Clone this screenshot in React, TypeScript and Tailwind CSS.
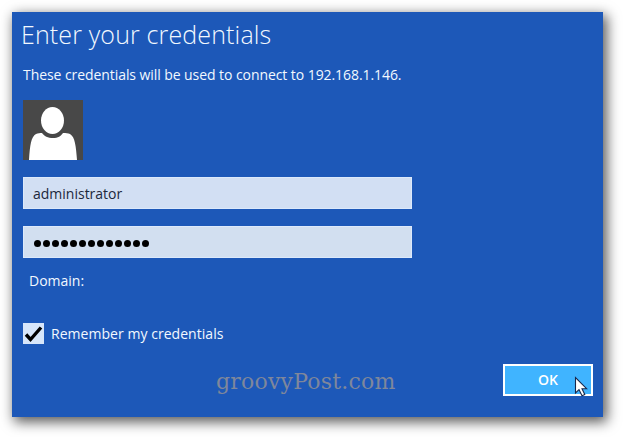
import React, { useState } from 'react';

function UserTile() {
  return (
    <svg className="mt-[15px] block h-[60px] w-[60px] bg-[#484848]" viewBox="0 0 60 60">
      <path
        d="M6 60C7 45 8 37 13 34C15 33 17 33 19 33C21 36 25 38 30 38C35 38 38 36 40 33C43 33 45 33 47 34C52 37 53 46 54 60Z"
        fill="#fff"
      />
      <ellipse cx="29.5" cy="20.5" rx="11.5" ry="13.5" fill="#fff" />
    </svg>
  );
}

function Cursor() {
  return (
    <svg className="absolute left-[69px] top-[10px] h-[22px] w-[15px]" viewBox="0 0 15 22">
      <path
        d="M1.5 1.5V17L5 13.6L8 19.8L10.8 18.5L8 12.7H12.6Z"
        fill="#fff"
        stroke="#17284c"
        strokeWidth="1.1"
      />
    </svg>
  );
}

function PasswordDots({ count }: { count: number }) {
  return (
    <div className="flex gap-[2px]">
      {Array.from({ length: count }, (_, i) => (
        <span key={i} className="h-[7px] w-[7px] rounded-full bg-black" />
      ))}
    </div>
  );
}

export default function App() {
  const [remember, setRemember] = useState(true);

  return (
    <div className="h-[437px] w-[623px] overflow-hidden bg-white pl-3 pt-3 font-['Open_Sans','Noto_Sans',sans-serif]">
      <main className="flex h-[405px] w-[591px] flex-col bg-[#1d58b8] pl-[11px] pr-[10px] text-[14px] text-[#f2f8ff] shadow-[3px_4px_12px_1px_rgba(0,0,0,0.65)]">
        <h1 className="-ml-[2px] mt-[5px] h-[34px] whitespace-nowrap text-[25px] font-[350] leading-[34px] tracking-[0.14px]">
          Enter your credentials
        </h1>
        <p className="mt-[14px] h-5 whitespace-nowrap leading-5 tracking-[-0.07px]">
          These credentials will be used to connect to 192.168.1.146.
        </p>
        <UserTile />
        <div className="mt-[17px] flex h-8 w-[389px] items-center border border-[#dce9fb] bg-[#d2dff3] pl-[9px] text-[#20283b]">
          administrator
        </div>
        <div className="mt-[17px] flex h-8 w-[389px] items-center border border-[#dce9fb] bg-[#d2dff0] pl-[10px] pt-[3px]">
          <PasswordDots count={13} />
        </div>
        <div className="ml-[6px] mt-[13px] h-5 leading-5">Domain:</div>
        <button
          className="mt-[32px] flex h-[21px] items-center gap-[7px] text-left"
          role="checkbox"
          aria-checked={remember}
          onClick={() => setRemember(!remember)}
        >
          <span className="h-[21px] w-[21px] bg-[#d7e6fa]">
            {remember && (
              <svg className="block" width="21" height="21" viewBox="0 0 21 21">
                <path d="M3 11.5L7.5 16.5L18 4.5" fill="none" stroke="#000" strokeWidth="3.4" />
              </svg>
            )}
          </span>
          <span className="whitespace-nowrap leading-5 tracking-[0.04px]">Remember my credentials</span>
        </button>
        <div className="mt-[20px] flex justify-between">
          <span className="ml-[193px] mt-[2px] h-8 whitespace-nowrap font-['DejaVu_Serif',serif] text-[22px] leading-8 tracking-[0.2px] text-[#7f879b]">
            groovyPost.com
          </span>
          <button className="relative h-8 w-[90px] border-2 border-white bg-[#40b4ff] font-semibold leading-7 text-white">
            OK
            <Cursor />
          </button>
        </div>
      </main>
    </div>
  );
}
